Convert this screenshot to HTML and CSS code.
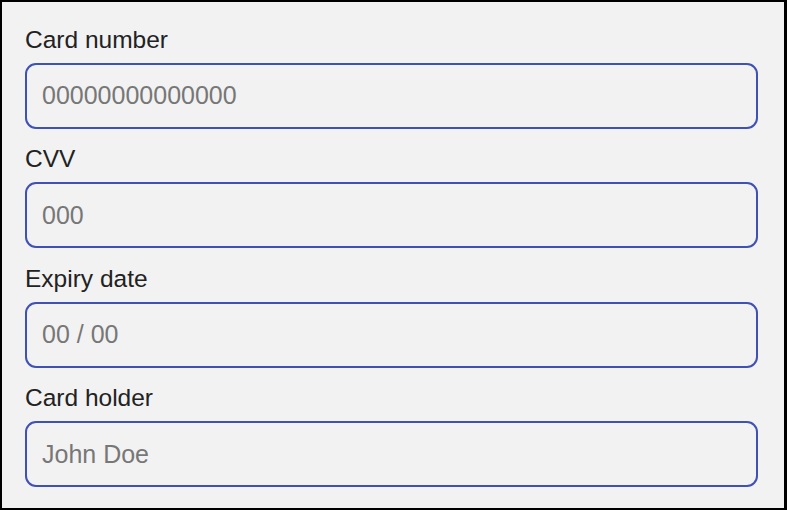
FILE: index.html
```html
<!DOCTYPE html>
<html lang="en">
<head>
<meta charset="utf-8">
<title>Card form</title>
<link rel="stylesheet" href="styles.css">
</head>
<body>
<form class="card-form">
  <div class="field">
    <label class="label" for="num">Card number</label>
    <input class="input" id="num" type="text" placeholder="00000000000000">
  </div>
  <div class="field">
    <label class="label" for="cvv">CVV</label>
    <input class="input" id="cvv" type="text" placeholder="000">
  </div>
  <div class="field">
    <label class="label" for="exp">Expiry date</label>
    <input class="input" id="exp" type="text" placeholder="00 / 00">
  </div>
  <div class="field">
    <label class="label" for="holder">Card holder</label>
    <input class="input" id="holder" type="text" placeholder="John Doe">
  </div>
</form>
</body>
</html>
```
FILE: styles.css
```css
html, body {
  margin: 0;
  padding: 0;
}
body {
  width: 787px;
  height: 510px;
  box-sizing: border-box;
  border: 2px solid #000;
  border-right-width: 3px;
  background: #f2f2f2;
  font-family: "Liberation Sans", Arial, sans-serif;
  overflow: hidden;
}
.card-form {
  display: flex;
  flex-direction: column;
  gap: 16.5px;
  padding: 23.5px 0 0 23px;
}
.field {
  display: flex;
  flex-direction: column;
  gap: 9px;
}
.label {
  font-size: 24.5px;
  line-height: 28px;
  color: #222;
}
.input {
  box-sizing: border-box;
  width: 733px;
  height: 66px;
  margin: 0;
  padding: 0 0 0 15px;
  border: 2.5px solid #3f51b5;
  border-radius: 11px;
  background: #f2f2f2;
  font-family: "Liberation Sans", Arial, sans-serif;
  font-size: 25px;
  color: #222;
  outline: none;
}
.input::placeholder {
  color: #777;
  opacity: 1;
}
```
